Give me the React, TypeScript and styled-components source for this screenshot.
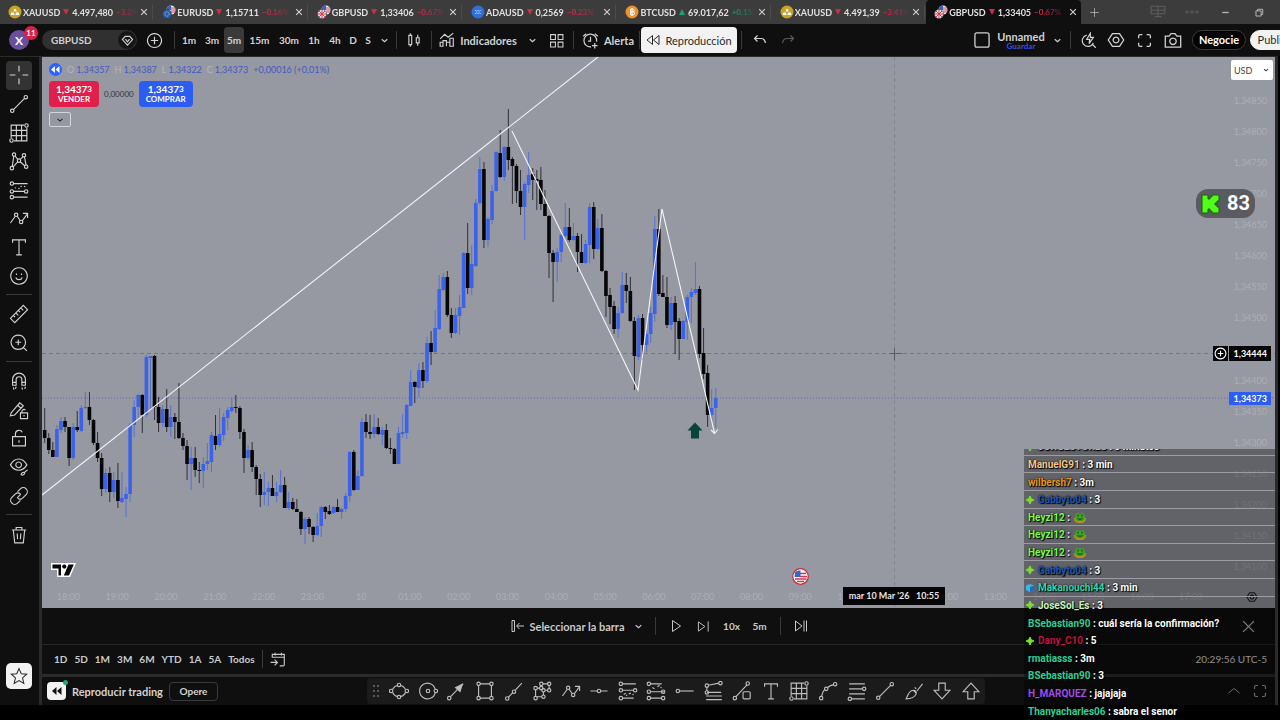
import React from "react";
import styled, { createGlobalStyle, css } from "styled-components";

const UI = `Lato, "Open Sans", sans-serif`;
const CHAT = `Roboto, "Liberation Sans", sans-serif`;
const INK = "#0f0f0f";
const EDGE = "#2b2b2c";
const PAPER = "#9698a2";
const TEXT = "#d2d2d2";

const Global = createGlobalStyle`
  * { box-sizing: border-box; }
  body { margin: 0; background: #000; font-family: ${UI}; font-size: 11px; color: ${TEXT}; }
  button, select { font: inherit; color: inherit; background: none; border: 0; padding: 0; margin: 0; }
  ol, ul { list-style: none; margin: 0; padding: 0; }
  svg { display: block; flex: none; }
`;

/* ---------- icons, all on a 28 unit grid ---------- */

type Node = [number, number];
type Glyph = { d: string; n?: Node[]; fill?: string; dots?: Node[] };

const glyphs: Record<string, Glyph> = {
  cross: { d: "M14 1v8M14 19v8M1 14h8M19 14h8" },
  trend: { d: "M6.5 21.5L21.5 6.5", n: [[4.5, 23.5], [23.5, 4.5]] },
  grid: { d: "M3 21V3H21M25 7V25H7M10.3 3V25M17.6 3V25M3 10.3H25M3 17.6H25", n: [[24.5, 3.5], [3.5, 24.5]] },
  pattern: { d: "M4.5 22L6.7 7M8.5 7L12.5 12M15.5 12L20 7.5M21.5 8L24 20M12.5 15L5.5 22.5M15.5 15L22.5 21", n: [[7, 5], [14, 13.5], [21, 6], [4, 24], [24, 22]] },
  forecast: { d: "M6 5H26M6 16H22M6 24H26", n: [[4, 5], [4, 16], [24, 16], [4, 24]], dots: [[9, 11], [14, 12], [17, 9], [22, 9]] },
  zigzag: { d: "M2 21L8.8 11.5M11.5 11.5L15.5 17.5M18.5 18L26 8M19.5 7.5h6.5v6.5", n: [[10, 9.5], [17, 19.5]] },
  text: { d: "M5 8V4H23V8M14 4V25M10 25H18" },
  smile: { d: "M14 2.5a11.5 11.5 0 1 0 .01 0M9.5 16a4.8 4.8 0 0 0 9 0M10.5 10.5v2M17.5 10.5v2" },
  ruler: { d: "M2 20L20 2l6 6L8 26zM6 16l2.5 2.5M9.5 12.5l3.5 3.5M13 9l2.5 2.5M16.5 5.5l3.5 3.5" },
  zoom: { d: "M13 3a10 10 0 1 0 .01 0M20 20l5 5M13 9v8M9 13h8" },
  magnet: { d: "M5 20V12a9 9 0 0 1 18 0v8h-5v-8a4 4 0 0 0-8 0v8zM5 16h5M18 16h5M6 23l1 3M10 22l-1 3M18 23l1 3M23 22l-1 3" },
  pencilLock: { d: "M3 18L15 4l5 4L8 21l-6 1zM12 7l5 5M16 18h10v8H16zM18 18v-2a3 3 0 0 1 5-2", dots: [[21, 22]] },
  lock: { d: "M5 12H23V25H5zM9 12V8a5 5 0 0 1 9.5-2M14 17v3.5" },
  eye: { d: "M2 11c6-11 17-11 23 0c-6 10-17 10-23 0zM13.5 7a4 4 0 1 0 .01 0M17 25c0-3 3-4 5-3c0 3-3 4-5 3zM22 21l4-3" },
  link: { d: "M12 8l4-4a5.5 5.5 0 0 1 8 8l-5 5a5.5 5.5 0 0 1-7 0M16 20l-4 4a5.5 5.5 0 0 1-8-8l5-5a5.5 5.5 0 0 1 7 0M11.5 16.5l5-5" },
  trash: { d: "M4 7H24M10 7V3.5h8V7M6 7l2 18H20L22 7M11.5 12l.5 8M16.5 12l-.5 8" },
  star: { d: "M14 2.5l3.5 8l8.5.7l-6.5 5.8l2 8.5l-7.5-4.5l-7.5 4.5l2-8.5L2 11.2l8.5-.7z" },
  ellipse: { d: "M5 12C7 8 10 6.5 12 6.3M16 6.3C19 6.7 21.5 8.5 23 12M5 16C7 20 10 21.5 12 21.7M16 21.7C19 21.3 21.5 19.5 23 16", n: [[14, 5.5], [14, 22.5], [3, 14], [25, 14]] },
  circle: { d: "M24 11.5A11 11 0 1 0 24 16.5", n: [[14, 14], [25, 14]] },
  arrow: { d: "M6.5 22L18 10M22 6l2-2", n: [[4.5, 24]], fill: "M24 3l-4 13l-8-7z" },
  rect: { d: "M7 4H21M7 24H21M5 6V22M23 6V22", n: [[5, 4], [23, 4], [5, 24], [23, 24]] },
  ray: { d: "M6 23L12 16.5M15.5 13L25 3", n: [[4.5, 24.5], [14, 15]] },
  poly: { d: "M5 22V12M7 10h4M12 8V6M15 4h8M24 6v5M22 13h-4M16 15v5M14 22H7", n: [[5, 24], [5, 10], [13, 10], [13, 4], [24, 4], [24, 13], [16, 13], [16, 22]] },
  hline: { d: "M2 14H11.5M16.5 14H26", n: [[14, 14]] },
  hray: { d: "M6 14H26", n: [[4, 14]] },
  longpos: { d: "M6 4H25M6 13H22M6 24H22M8 19l3-2M15 18l3-1", n: [[4, 4], [4, 13], [24, 13], [4, 24]], dots: [[21, 19], [12, 20]] },
  shortpos: { d: "M6 4H22M6 15H25M6 24H22M9 9l3 2M16 8l3-2", n: [[4, 4], [4, 15], [24, 15], [24, 24], [4, 24]], dots: [[21, 9]] },
  fibchannel: { d: "M4 14V8M6 6L21 3M4 16H24M3 21H25M3 26H25", n: [[4, 6.5], [23, 3], [4, 16]] },
  shape: { d: "M5.5 22L21 5.5M17 15h7a1.5 1.5 0 0 1 1.500 1.500v7a1.500 1.500 0 0 1-1.500 1.500h-7a1.500 1.500 0 0 1-1.500-1.500v-7a1.500 1.500 0 0 1 1.500-1.500z", n: [[4, 24], [22, 3.5]] },
  curve: { d: "M5 22C6 17 8 13 10 12M13 9.5C16 7 19 5.5 22 5", n: [[4.5, 24], [11.5, 11], [24, 4.5]] },
  fiblines: { d: "M3 4H25M3 11H22M3 18H25M6 25H25", n: [[24, 11], [4, 25]] },
  brush: { d: "M3 25C6 17 9 13 13 13c3 0 5 2 4 5c-2 5-7 7-14 7zM13 13L17 17M18 14L26 4M15 9l2 2" },
  down: { d: "M9.5 3h9v10H25L14 25L3 13h6.5z" },
  up: { d: "M9.5 25h9V15H25L14 3L3 15h6.5z" },
  candles: { d: "M5 6h5v16H5zM7.5 2v4M7.5 22v4M18 10h5v9h-5zM20.5 5v5M20.5 19v5" },
  indicators: { d: "M2 25V18h5v7zM7 25V15h6v10M13 25V18h6v7M19 25V11h6v14zM2 12l8-8l6 5l9-7" },
  tiles: { d: "M3 3h9v9H3zM17 3h9v9h-9zM3 17h9v9H3zM17 17h9v9h-9z" },
  alarm: { d: "M24 16A10.5 10.5 0 1 0 15 24.5M14 8v7h-4M2 7l5-4M21 3l5 4M21 18v9M16.5 22.5h9" },
  rewind: { d: "M13 5v18L2 14zM26 5v18L15 14z" },
  undo: { d: "M9 5L3 11l6 6M3 11h13c5 0 8 3 9 9" },
  redo: { d: "M19 5l6 6l-6 6M25 11H12c-5 0-8 3-9 9" },
  square: { d: "M6 3H22a3 3 0 0 1 3 3V22a3 3 0 0 1-3 3H6a3 3 0 0 1-3-3V6a3 3 0 0 1 3-3z" },
  quick: { d: "M11 5a9.5 9.5 0 1 0 11 13M20 20l6 6M17 2l-6 10h5l-1 7l7-10h-5z" },
  hexagon: { d: "M8.5 4H19.5L26 14L19.5 24H8.5L2 14zM14 9.5a4.5 4.5 0 1 0 .01 0" },
  expand: { d: "M3 10V6a3 3 0 0 1 3-3h4M18 3h4a3 3 0 0 1 3 3v4M25 18v4a3 3 0 0 1-3 3h-4M10 25H6a3 3 0 0 1-3-3v-4" },
  camera: { d: "M2 8h6l3-4h6l3 4h6v17H2zM14 11a5 5 0 1 0 .01 0" },
  plusCircle: { d: "M14 2.5a11.5 11.5 0 1 0 .01 0M14 8v12M8 14h12" },
  gem: { d: "M9 5H19L25 12L14 24L3 12zM9.5 11L14 17L18.5 11" },
  chevron: { d: "M7 11l7 6l7-6" },
  chevronUp: { d: "M3 18L14 9l11 9" },
  close: { d: "M4 4L24 24M24 4L4 24" },
  plus: { d: "M14 3V25M3 14H25" },
  desk: { d: "M2 4H26V17H2zM2 11H26M14 4V22M8 22H20" },
  dots: { d: "", n: [[4, 14], [14, 14], [24, 14]] },
  minus: { d: "M4 14H24" },
  windows: { d: "M3 9H19V25H3zM8 9V4H24V20H19" },
  pickBar: { d: "M2 3h5v22H2zM12 14H26M17 8l-6 6l6 6" },
  play: { d: "M7 3L23 14L7 25z" },
  step: { d: "M3 4L17 14L3 24zM24 3V25" },
  toEnd: { d: "M3 4L16 14L3 24zM20 3V25M25 3V25" },
  calendar: { d: "M4 12V6H25V24a2 2 0 0 1-2 2H17M4 11H25M9 3V8M20 3V8M1 20h11M8 15l5 5l-5 5" },
};

const Icon = ({ name, size = 20, w = 2 }: { name: string; size?: number; w?: number }) => {
  const g = glyphs[name];
  return (
    <svg width={size} height={size} viewBox="0 0 28 28" fill="none" stroke="currentColor" strokeWidth={w} aria-hidden="true">
      <path d={g.d} />
      {g.fill && <path d={g.fill} fill="currentColor" stroke="none" />}
      {g.n?.map(([x, y]) => <circle key={`${x}-${y}`} cx={x} cy={y} r={2.4} />)}
      {g.dots?.map(([x, y]) => <circle key={`${x}-${y}`} cx={x} cy={y} r={1} fill="currentColor" stroke="none" />)}
    </svg>
  );
};

const CoinIcon = ({ kind }: { kind: string }) => (
  <svg width="14" height="14" viewBox="0 0 14 14" aria-hidden="true">
    {kind === "gold" && (
      <>
        <circle cx="7" cy="7" r="6.5" fill="#c9a227" />
        <path d="M5.5 6.5l.7-2.5h1.800l.7 2.5zM2.5 10l.8-2.600h2.600L6.600 10zM7.400 10l.7-2.600h2.600l.8 2.600z" fill="#fff" />
      </>
    )}
    {kind === "ada" && (
      <>
        <circle cx="7" cy="7" r="6.5" fill="#2f6fdc" />
        <path d="M4 5.5h6M4 8.5h6M5 7h4" stroke="#a9c8ff" strokeDasharray="1 .6" />
      </>
    )}
    {kind === "btc" && (
      <>
        <circle cx="7" cy="7" r="6.5" fill="#f0922b" />
        <path d="M5.5 4h2.200a1.400 1.400 0 0 1 0 2.800H5.5h2.600a1.500 1.500 0 0 1 0 3H5.5zM7 3v8" fill="none" stroke="#fff" />
      </>
    )}
    {(kind === "eur" || kind === "gbp") && (
      <>
        <circle cx="9" cy="5" r="4.5" fill="#e9e9f2" />
        <path d="M9 .5a4.5 4.5 0 0 0-4.5 4.5H9z" fill="#3a5fb8" />
        <path d="M9 3h4M9 5h4.5M5 7h8" stroke="#d4475c" />
        <circle cx="5" cy="9" r="4.5" fill={kind === "eur" ? "#1f5fc4" : "#eceaf2"} stroke="#3c3c3c" strokeWidth=".6" />
        {kind === "eur" ? (
          <circle cx="5" cy="9" r="2.2" fill="none" stroke="#e9c93d" strokeDasharray="1 1" />
        ) : (
          <path d="M5 4.8v8.400M.8 9h8.400M2 6l6 6M8 6l-6 6" stroke="#d4364d" />
        )}
      </>
    )}
  </svg>
);

/* ---------- page frame ---------- */

const Page = styled.div`
  position: relative;
  display: flex;
  flex-direction: column;
  min-height: 100vh;
  padding-bottom: 15px;
  overflow: hidden;
`;

const Workspace = styled.div`
  flex: 1;
  display: flex;
  gap: 3px;
  padding-top: 1px;
  background: ${EDGE};
  border-right: 2px solid #000;
`;

const Column = styled.main`
  flex: 1;
  min-width: 0;
  display: flex;
  flex-direction: column;
  padding-right: 3px;
`;

/* ---------- browser style tabs ---------- */

const TabStrip = styled.nav`
  display: flex;
  height: 24px;
  background: #3c3c3d;
`;

const Tab = styled.div<{ $active?: boolean }>`
  flex: 108 1 0;
  min-width: 0;
  display: flex;
  align-items: center;
  gap: 1px;
  padding: 0 1px 0 8px;
  background: ${(p) => (p.$active ? INK : "transparent")};
  border-radius: 4px 4px 0 0;
`;

const TabLink = styled.a`
  flex: 1;
  min-width: 0;
  display: flex;
  align-items: center;
  gap: 3px;
  overflow: hidden;
  white-space: nowrap;
  color: #e0e0e0;
  font-size: 9px;
  font-weight: 700;
  text-decoration: none;
  mask-image: linear-gradient(90deg, #000 80%, rgba(0, 0, 0, 0.2) 100%);
`;

const Delta = styled.span<{ $up?: boolean }>`
  font-size: 8px;
  color: ${(p) => (p.$up ? "#1f9d78" : "#d02a4c")};
`;

const Mark = styled.svg<{ $up?: boolean }>`
  fill: ${(p) => (p.$up ? "#1f9d78" : "#d02a4c")};
  transform: ${(p) => (p.$up ? "none" : "rotate(180deg)")};
`;

const TabClose = styled.button`
  width: 14px;
  display: grid;
  place-items: center;
  color: #cfcfcf;
`;

const TabRule = styled.i`
  width: 1px;
  height: 14px;
  background: #4c4c4d;
`;

const WindowTools = styled.div`
  flex: 140 1 0;
  display: flex;
  align-items: center;
  padding: 0 3px 0 8px;
  color: #b8b8b8;
`;

const tabs = [
  { coin: "gold", name: "XAUUSD", price: "4.497,480", pct: "−3.29%" },
  { coin: "eur", name: "EURUSD", price: "1,15711", pct: "−0.16%" },
  { coin: "gbp", name: "GBPUSD", price: "1,33406", pct: "−0.67%" },
  { coin: "ada", name: "ADAUSD", price: "0,2569", pct: "−0.23%" },
  { coin: "btc", name: "BTCUSD", price: "69.017,62", pct: "+0.15%", up: true },
  { coin: "gold", name: "XAUUSD", price: "4.491,39", pct: "−3.41%" },
  { coin: "gbp", name: "GBPUSD", price: "1,33405", pct: "−0.67%", active: true },
];

/* ---------- top toolbar ---------- */

const TopBar = styled.header`
  display: flex;
  align-items: center;
  height: 32px;
  background: ${INK};
  overflow: hidden;
  white-space: nowrap;
`;

const Avatar = styled.button`
  position: relative;
  width: 20px;
  height: 20px;
  margin: 0 13px 0 9px;
  flex: none;
  border-radius: 50%;
  background: #6a4f9c;
  color: #fff;
  font-size: 12px;
  font-weight: 700;
`;

const Badge = styled.span`
  position: absolute;
  left: 15px;
  top: -4px;
  width: 14px;
  height: 14px;
  border-radius: 50%;
  background: #dc1f45;
  font-size: 8px;
  line-height: 14px;
  text-align: center;
`;

const SymbolPill = styled.button`
  display: flex;
  align-items: center;
  justify-content: space-between;
  flex: none;
  width: 95px;
  height: 20px;
  padding: 0 1px 0 9px;
  border-radius: 10px;
  background: #303031;
  font-size: 10px;
  font-weight: 700;
`;

const GemRing = styled.span`
  display: grid;
  place-items: center;
  width: 18px;
  height: 18px;
  border-radius: 50%;
  background: #161616;
`;

const Cell = styled.button<{ $w: number; $on?: boolean; $dim?: boolean }>`
  display: flex;
  align-items: center;
  justify-content: center;
  gap: 5px;
  flex: none;
  width: ${(p) => p.$w}px;
  height: 26px;
  font-weight: 700;
  font-size: 10px;
  border-radius: 4px;
  ${(p) => p.$on && css`background: #3a3a3b;`}
  ${(p) => p.$dim && css`color: #5c5c5c;`}
`;

const Wide = styled(Cell)`
  font-size: 11px;
`;

const Rule = styled.i<{ $m?: number }>`
  flex: none;
  width: 1px;
  height: 18px;
  margin: 0 ${(p) => p.$m ?? 3}px;
  background: #3a3a3b;
`;

const ReplayButton = styled.button`
  display: flex;
  align-items: center;
  justify-content: center;
  gap: 5px;
  flex: none;
  width: 96px;
  height: 26px;
  border-radius: 4px;
  background: #f2f2f3;
  color: #2a2a2e;
`;

const Spacer = styled.div`
  flex: 1;
`;

const LayoutName = styled.button`
  flex: none;
  width: 52px;
  font-size: 11px;
  font-weight: 700;
  line-height: 11px;
`;

const Save = styled.span`
  display: block;
  font-size: 8px;
  line-height: 8px;
  color: #3350e0;
`;

const Pill = styled.button<{ $light?: boolean }>`
  flex: none;
  width: 54px;
  height: 20px;
  margin-left: 4px;
  border-radius: 10px;
  border: 1px solid ${(p) => (p.$light ? "#f2f2f2" : "#3a3a3b")};
  background: ${(p) => (p.$light ? "#f2f2f2" : "#000")};
  color: ${(p) => (p.$light ? "#2a2a2e" : "#fff")};
  font-weight: ${(p) => (p.$light ? 400 : 700)};
  line-height: 18px;
`;

const PublishSlot = styled.div`
  flex: none;
  width: 34px;
  overflow: hidden;
`;

/* ---------- left toolbar ---------- */

const Side = styled.aside`
  display: flex;
  flex-direction: column;
  align-items: center;
  width: 39px;
  padding: 4px 1px 16px 0;
  background: ${INK};
`;

const ToolGroup = styled.div<{ $h: number }>`
  display: flex;
  flex-direction: column;
  height: ${(p) => p.$h}px;
`;

const Tool = styled.button<{ $on?: boolean }>`
  flex: 1;
  width: 26px;
  display: grid;
  place-items: center;
  border-radius: 4px;
  background: ${(p) => (p.$on ? "#333334" : "none")};
`;

const ToolRule = styled.i`
  width: 26px;
  height: 1px;
  margin: 4px 0 5px;
  background: #3a3a3b;
`;

const StarTool = styled.button`
  display: grid;
  place-items: center;
  width: 26px;
  height: 26px;
  margin-top: auto;
  border-radius: 5px;
  background: #f2f2f3;
  color: #2a2a2e;
`;

/* ---------- chart ---------- */

const Chart = styled.section`
  position: relative;
  flex: 1;
  min-height: 551px;
  display: flex;
  flex-direction: column;
  background: ${PAPER};
  overflow: hidden;
`;

const Canvas = styled.svg`
  position: absolute;
  inset: 0;
  width: 100%;
  height: 100%;
`;

const ChartBody = styled.div`
  position: relative;
  flex: 1;
  display: flex;
  justify-content: space-between;
`;

const Legend = styled.div`
  display: flex;
  flex-direction: column;
  align-items: flex-start;
  gap: 5px;
  padding: 5px 7px;
`;

const Ohlc = styled.div`
  display: flex;
  align-items: center;
  gap: 5px;
  height: 14px;
  font-size: 9px;
  color: #4359c8;
`;

const Letter = styled.span`
  margin-right: 2px;
  color: #b4b6be;
`;

const RewindDot = styled.span`
  display: grid;
  place-items: center;
  width: 13px;
  height: 13px;
  border-radius: 50%;
  background: #2962ff;
  color: #fff;
`;

const Trade = styled.div`
  display: flex;
  align-items: center;
  gap: 5px;
  font-size: 8px;
  color: #33343a;
`;

const TradeButton = styled.button<{ $buy?: boolean }>`
  width: ${(p) => (p.$buy ? 54 : 50)}px;
  height: 26px;
  border-radius: 4px;
  background: ${(p) => (p.$buy ? "#2c5cf2" : "#e0204b")};
  color: #fff;
  font-size: 8px;
  line-height: 10px;
  font-weight: 700;
`;

const Quote = styled.span`
  display: block;
  font-size: 10px;
`;

const Pip = styled.span`
  font-size: 8px;
  vertical-align: 1px;
`;

const Fold = styled.button`
  display: grid;
  place-items: center;
  width: 22px;
  height: 15px;
  border: 1px solid #d5d6da;
  border-radius: 2px;
  color: #222;
`;

const PriceAxis = styled.div`
  display: flex;
  flex-direction: column;
  align-items: flex-end;
  padding: 3px 2px 13px 0;
`;

const UnitBox = styled.label`
  display: flex;
  align-items: center;
  width: 42px;
  height: 20px;
  padding-right: 3px;
  border-radius: 2px;
  background: #fff;
  color: #444;
  font-size: 9px;
`;

const Unit = styled.select`
  flex: 1;
  min-width: 0;
  appearance: none;
  padding-left: 3px;
  outline: none;
`;

const Prices = styled.ol`
  flex: 1;
  display: flex;
  flex-direction: column;
  justify-content: space-between;
  margin-top: 15px;
  padding-right: 6px;
  color: #adafb8;
  font-size: 9px;
  line-height: 12px;
  text-align: right;
`;

const PriceItem = styled.li`
  height: 12px;
`;

const Hours = styled.ol`
  position: relative;
  display: grid;
  grid-template-columns: repeat(24, 1fr);
  height: 22px;
  padding: 0 60px 0 2px;
  line-height: 22px;
  text-align: center;
  color: #adafb8;
  font-size: 9px;
`;

const CursorPrice = styled.div`
  position: absolute;
  top: 289px;
  right: 4px;
  display: flex;
  gap: 1px;
  color: #fff;
`;

const PriceTag = styled.span<{ $live?: boolean }>`
  padding: 0 4px 0 5px;
  background: ${(p) => (p.$live ? "#2c5cf2" : "#060606")};
  color: #fff;
  font-size: 9px;
  font-weight: 700;
  line-height: ${(p) => (p.$live ? 13 : 15)}px;
`;

const AddAlert = styled.button`
  display: grid;
  place-items: center;
  width: 15px;
  height: 15px;
  background: #060606;
`;

const LivePrice = styled.div`
  position: absolute;
  top: 335px;
  right: 4px;
  display: flex;
`;

const CursorTime = styled.div`
  position: absolute;
  left: 801px;
  bottom: 3px;
  width: 102px;
  background: #060606;
  color: #e4e4e4;
  font-size: 9px;
  font-weight: 700;
  line-height: 18px;
  text-align: center;
  white-space: pre;
`;

const Flag = styled.div`
  position: absolute;
  left: 750px;
  bottom: 23px;
`;

const AxisSettings = styled.button`
  position: absolute;
  right: 17px;
  bottom: 5px;
  color: #1c1c1e;
`;

const Logo = styled.div`
  position: absolute;
  left: 8px;
  bottom: 30px;
`;

const Viewers = styled.div`
  position: absolute;
  top: 132px;
  right: 20px;
  display: flex;
  align-items: center;
  gap: 7px;
  width: 59px;
  height: 29px;
  padding-left: 5px;
  border-radius: 12px;
  background: rgba(82, 82, 87, 0.88);
  color: #fff;
  font: 700 20px/29px ${CHAT};
`;

/* high, body top, body bottom, low of every bar in plot pixels; the last field tells rising from falling */
const bars = `408,430,438,443,d 433,438,450,454,d 442,450,457,457,d 425,429,457,457,u 417,421,430,433,u 417,421,427,432,d
427,427,458,466,d 423,427,458,460,u 411,427,430,432,d 405,408,431,432,u 392,407,408,409,u 392,407,420,425,d 419,420,443,445,d
432,443,458,462,d 453,458,489,496,d 468,473,489,493,u 467,473,492,502,d 472,480,492,498,u 463,480,501,508,d 472,498,502,503,u
487,494,499,517,u 423,425,494,502,u 400,407,425,437,u 394,395,407,420,u 394,395,415,433,d 355,357,415,417,u 356,356,358,410,u
355,356,407,420,d 397,407,423,432,d 405,409,423,427,u 389,409,427,432,d 405,417,427,437,u 413,417,422,439,d 383,422,438,439,d
433,438,446,450,d 440,446,464,480,d 447,458,464,490,u 447,458,470,477,d 462,470,471,483,d 457,464,471,488,u 443,461,464,470,u
432,435,462,472,u 415,436,445,450,d 408,434,445,447,u 413,417,435,441,u 407,410,418,430,u 398,407,411,413,u 395,407,408,413,d
406,408,432,439,d 429,432,458,473,d 445,450,458,460,u 442,450,467,472,d 465,467,479,495,d 474,479,495,507,d 472,492,495,505,u
482,488,492,506,u 475,488,496,496,d 482,492,496,502,u 470,485,492,493,u 477,485,508,508,d 492,502,508,510,u 498,502,509,510,d
499,509,512,512,d 511,512,529,535,d 517,519,529,544,u 517,519,527,534,d 526,527,535,542,d 513,526,535,536,u 506,507,526,537,u
506,507,512,519,d 505,511,514,515,d 506,507,513,514,u 499,507,512,512,d 508,509,512,519,u 493,496,509,512,u 451,452,496,502,u
450,452,490,491,d 470,476,490,490,u 418,422,476,477,u 414,422,432,438,d 415,432,434,439,d 414,427,434,438,u 418,427,434,435,d
427,430,435,445,u 424,430,448,449,d 438,448,449,454,d 448,449,464,464,d 427,433,464,464,u 414,432,434,438,u 404,405,433,439,u
370,382,406,406,u 381,382,387,403,d 363,370,388,397,u 362,370,381,388,d 337,343,381,383,u 331,343,352,365,d 310,328,352,353,u
275,289,329,330,u 273,277,290,291,u 271,277,315,317,d 308,315,333,338,d 308,315,333,334,u 295,307,316,335,u 252,253,308,308,u
223,253,288,294,d 245,264,288,295,u 199,203,266,267,u 157,169,203,205,u 162,169,240,248,d 217,219,240,247,u 185,191,220,224,u
151,152,191,192,u 130,153,177,178,d 146,147,177,181,u 109,147,160,170,d 157,159,166,204,d 164,166,191,203,d 170,191,207,215,d
182,184,207,240,u 152,175,185,193,u 168,174,180,200,d 170,179,181,210,d 167,180,204,210,d 190,204,216,216,d 215,216,253,278,d
250,253,262,302,d 248,252,262,282,u 234,235,252,262,u 203,227,236,238,u 208,227,240,242,d 223,236,240,241,u 233,236,252,272,d
234,252,263,263,d 240,244,263,264,u 203,207,245,263,u 202,207,249,259,d 219,228,249,250,u 214,228,271,272,d 270,271,296,317,d
288,295,307,324,d 301,306,329,334,d 307,313,329,338,u 272,285,313,314,u 273,285,291,303,d 277,291,321,322,d 317,321,356,390,d
315,318,357,360,u 314,318,345,360,d 330,334,345,352,u 307,313,334,343,u 216,229,314,322,u 209,229,294,296,d 275,293,297,297,d
277,297,325,328,d 297,303,325,330,u 296,303,322,354,d 318,321,339,360,d 320,321,339,339,u 295,297,322,340,u 288,292,297,323,u
262,289,293,295,u 286,289,354,358,d 328,353,374,379,d 365,373,415,427,d 389,408,415,423,u 388,398,408,428,u`
  .split(/\s+/)
  .map((row) => row.split(","))
  .map(([hi, top, bottom, lo, dir]) => ({ hi: +hi, top: +top, bottom: +bottom, lo: +lo, up: dir === "u" }));

const FIRST_BAR = 44.7;
const BAR_STEP = 4.067;

const Plot = () => (
  <Canvas role="img" aria-label="GBPUSD 5m">
    <line x1="0" x2="100%" y1="296.5" y2="296.5" stroke="#74757d" strokeDasharray="4 3" />
    <line x1="852.5" x2="852.5" y1="0" y2="100%" stroke="#83858d" strokeDasharray="4 3" />
    <line x1="0" x2="100%" y1="341" y2="341" stroke="#5a68c4" strokeDasharray="1 2" />
    <g transform="translate(-42 -57)">
      {bars.map((b, i) => {
        const x = FIRST_BAR + i * BAR_STEP;
        return (
          <g key={i} fill={b.up ? "#3b62ea" : "#060608"}>
            <rect x={x - 0.5} y={b.hi} width="1" height={b.lo - b.hi} opacity=".7" />
            <rect x={x - 1.8} y={b.top} width="3.6" height={Math.max(1, b.bottom - b.top)} />
          </g>
        );
      })}
      <g fill="none" stroke="#f4f4f6" strokeWidth="1.1">
        <path d="M42 495L598 57" />
        <path d="M512 131L638 390L662 209L714.5 433M711 430l3.5 3.5l3.5-4" />
      </g>
      <path d="M695 422.5l7.5 8h-3.5v8h-8v-8h-3.5z" fill="#07453b" />
      <path d="M890 353.500h12M894.500 348v12" stroke="#5b5c64" />
    </g>
  </Canvas>
);

const prices = ["1,34850", "1,34800", "1,34750", "1,34700", "1,34650", "1,34600", "1,34550", "1,34500", "", "1,34400", "1,34350", "1,34300", "1,34250", "1,34200", "1,34150", "1,34100"];

const hours = ["18:00", "19:00", "20:00", "21:00", "22:00", "23:00", "10", "01:00", "02:00", "03:00", "04:00", "05:00", "06:00", "07:00", "08:00", "09:00", "10:00", "11:00", "12:00", "13:00", "14:00", "15:00", "16:00", "17:00"];

/* ---------- bars under the chart ---------- */

const ReplayBar = styled.div`
  display: grid;
  grid-template-columns: 1fr auto 1fr;
  align-items: center;
  height: 37px;
  background: ${INK};
  border-bottom: 1px solid #262627;
  color: #c9c9c9;
`;

const ReplayTools = styled.div`
  grid-column: 2;
  display: flex;
  align-items: center;
  padding-left: 4px;
`;

const CloseReplay = styled.button`
  justify-self: end;
  margin-right: 19px;
  color: #c0c0c0;
`;

const RangeBar = styled.div`
  display: flex;
  align-items: center;
  gap: 7px;
  height: 29px;
  padding: 0 8px 1px 12px;
  background: ${INK};
  margin-bottom: 3px;
`;

const Range = styled.button`
  font-size: 10px;
  font-weight: 700;
  color: #c9c9c9;
`;

const Clock = styled.span`
  margin-left: auto;
  font-size: 10px;
  color: #dcdcdc;
`;

const Footer = styled.footer`
  display: flex;
  align-items: center;
  height: 28px;
  background: ${INK};
`;

const Broker = styled.div`
  display: flex;
  align-items: center;
  flex: 0 0 325px;
  gap: 6px;
  padding-left: 5px;
  font-weight: 700;
  font-size: 11px;
`;

const BrokerIcon = styled.span`
  position: relative;
  display: grid;
  place-items: center;
  width: 19px;
  height: 18px;
  border-radius: 4px;
  background: #f2f2f3;
  color: #111;
`;

const Online = styled.i`
  position: absolute;
  right: -2px;
  top: -2px;
  width: 5px;
  height: 5px;
  border-radius: 50%;
  background: #1fa67a;
`;

const Operate = styled.button`
  width: 49px;
  height: 19px;
  border: 1px solid #3a3a3b;
  border-radius: 4px;
  font-size: 10px;
`;

const Dock = styled.div`
  display: flex;
  align-items: center;
  flex: 0 0 618px;
  height: 26px;
  border-radius: 4px;
  background: #1b1b1c;
  color: #bdbdbd;
`;

const DockTool = styled.button`
  flex: 1;
  display: grid;
  place-items: center;
`;

const PanelTools = styled.div`
  display: flex;
  gap: 12px;
  margin-left: auto;
  padding-right: 8px;
  color: #a0a0a0;
`;

const dock = ["ellipse", "circle", "arrow", "rect", "ray", "poly", "zigzag", "hline", "longpos", "shortpos", "hray", "fibchannel", "shape", "text", "grid", "curve", "fiblines", "trend", "brush", "down", "up"];

/* ---------- stream chat ---------- */

const Chat = styled.div`
  position: absolute;
  right: 5px;
  bottom: 0;
  display: flex;
  flex-direction: column;
  justify-content: flex-end;
  width: 251px;
  height: 271px;
  overflow: hidden;
  background: rgba(0, 0, 0, 0.35);
  pointer-events: none;
`;

const Messages = styled.ul`
  flex: none;
  display: grid;
  grid-auto-rows: 1fr;
  height: 282px;
  font-family: ${CHAT};
  font-size: 10px;
  font-weight: 700;
  color: #fff;
`;

const Message = styled.li<{ $line: boolean; $badged: boolean }>`
  display: flex;
  align-items: center;
  gap: 4px;
  padding: 1px 0 0 ${(p) => (p.$badged ? 2 : 4)}px;
  border-bottom: 1px solid ${(p) => (p.$line ? "#9c9da4" : "transparent")};
  text-shadow: 0 0 2px #000, 1px 1px 1px #000;
  white-space: nowrap;
`;

const Who = styled.span<{ $c: string }>`
  color: ${(p) => p.$c};
`;

const chat: { who: string; c: string; text: string; badge?: "clover" | "cube"; frog?: boolean }[] = [
  { who: "JORGESTORES", c: "#7fd858", text: "3 minutos", badge: "clover" },
  { who: "ManuelG91", c: "#f2c98a", text: "3 min" },
  { who: "wilbersh7", c: "#e8951c", text: "3m" },
  { who: "Gabbyto04", c: "#1c55b0", text: "3", badge: "clover" },
  { who: "Heyzi12", c: "#75fd46", text: "", frog: true },
  { who: "Heyzi12", c: "#75fd46", text: "", frog: true },
  { who: "Heyzi12", c: "#75fd46", text: "", frog: true },
  { who: "Gabbyto04", c: "#1c55b0", text: "3", badge: "clover" },
  { who: "Makanouchi44", c: "#31d6b0", text: "3 min", badge: "cube" },
  { who: "JoseSol_Es", c: "#c8f5b4", text: "3", badge: "clover" },
  { who: "BSebastian90", c: "#2fcf96", text: "cuál sería la confirmación?" },
  { who: "Dany_C10", c: "#c4123f", text: "5", badge: "clover" },
  { who: "rmatiasss", c: "#2fcf96", text: "3m" },
  { who: "BSebastian90", c: "#2fcf96", text: "3" },
  { who: "H_MARQUEZ", c: "#a04ee8", text: "jajajaja" },
  { who: "Thanyacharles06", c: "#2fcf96", text: "sabra el senor" },
];

const ChatBadge = ({ kind }: { kind: "clover" | "cube" }) => (
  <svg width="8" height="8" viewBox="0 0 8 8" aria-hidden="true">
    {kind === "clover" ? (
      <path d="M4 0l1.3 2.7L8 4L5.3 5.3L4 8L2.7 5.3L0 4l2.7-1.3z" fill="#7be02a" stroke="#7be02a" />
    ) : (
      <>
        <path d="M0 1.5L4 0l4 1.5V6L4 8L0 6z" fill="#39b6f2" />
        <path d="M4 3l4-1.5V6L4 8z" fill="#1271c4" />
      </>
    )}
  </svg>
);

const Frog = () => (
  <svg width="12" height="11" viewBox="0 0 12 11" aria-hidden="true">
    <path d="M0 6c0 4 3 5 6 5s6-1 6-5z" fill="#c98f22" />
    <path d="M1 6C1 3 2 1 3.5 1C5 1 5 2 6 2s1-1 2.5-1S11 3 11 6c0 2-2 3.5-5 3.5S1 8 1 6z" fill="#3fa424" />
    <path d="M4 2.5v2M8 2.5v2M3.5 6.5c1.5 1 3.5 1 5 0" stroke="#0c3a0a" fill="none" />
  </svg>
);

const intervals: [string, number][] = [["1m", 22], ["3m", 24], ["5m", 20], ["15m", 31], ["30m", 28], ["1h", 22], ["4h", 20], ["D", 16], ["S", 14]];

const SideGroup = ({ names, h, active }: { names: string[]; h: number; active?: string }) => (
  <ToolGroup $h={h}>
    {names.map((n) => (
      <Tool key={n} $on={n === active} aria-label={n}>
        <Icon name={n} w={1.6} />
      </Tool>
    ))}
  </ToolGroup>
);

export default function App() {
  return (
    <Page>
      <Global />
      <TabStrip>
        {tabs.map((t, i) => (
          <Tab key={i} $active={t.active}>
            <CoinIcon kind={t.coin} />
            <TabLink href="#">
              <span>{t.name}</span>
              <Mark $up={t.up} width="6" height="6" viewBox="0 0 6 6"><path d="M3 0L6 6H0z" /></Mark>
              <span>{t.price}</span>
              <Delta $up={t.up}>{t.pct}</Delta>
            </TabLink>
            <TabClose aria-label="close"><Icon name="close" size={8} w={4} /></TabClose>
            {!t.active && <TabRule />}
          </Tab>
        ))}
        <WindowTools>
          <Icon name="plus" size={11} w={2} />
          <Spacer />
          <Cell $w={34} $dim aria-label="desk"><Icon name="desk" size={16} /></Cell>
          <Cell $w={34} $dim aria-label="more"><Icon name="dots" size={14} w={2} /></Cell>
          <Cell $w={34} aria-label="minimize"><Icon name="minus" size={9} w={4} /></Cell>
          <Cell $w={34} aria-label="restore"><Icon name="windows" size={9} w={3} /></Cell>
        </WindowTools>
      </TabStrip>

      <TopBar>
        <Avatar aria-label="account">X<Badge>11</Badge></Avatar>
        <SymbolPill>GBPUSD<GemRing><Icon name="gem" size={13} w={2.4} /></GemRing></SymbolPill>
        <Cell $w={34} aria-label="add"><Icon name="plusCircle" size={17} /></Cell>
        <Rule />
        {intervals.map(([label, w]) => (
          <Cell key={label} $w={w} $on={label === "5m"}>{label}</Cell>
        ))}
        <Cell $w={18} aria-label="intervals"><Icon name="chevron" size={11} w={3} /></Cell>
        <Rule />
        <Cell $w={28} aria-label="bar style"><Icon name="candles" size={16} /></Cell>
        <Rule />
        <Wide $w={86}><Icon name="indicators" size={16} />Indicadores</Wide>
        <Cell $w={22} aria-label="favorites"><Icon name="chevron" size={11} w={3} /></Cell>
        <Cell $w={26} aria-label="templates"><Icon name="tiles" size={15} /></Cell>
        <Rule $m={4} />
        <Wide $w={60}><Icon name="alarm" size={17} />Alerta</Wide>
        <Rule $m={1} />
        <ReplayButton><Icon name="rewind" size={14} />Reproducción</ReplayButton>
        <Rule $m={4} />
        <Cell $w={28} aria-label="undo"><Icon name="undo" size={14} w={2.4} /></Cell>
        <Cell $w={28} $dim aria-label="redo"><Icon name="redo" size={14} w={2.4} /></Cell>
        <Spacer />
        <Cell $w={26} aria-label="layout"><Icon name="square" size={18} /></Cell>
        <LayoutName>Unnamed<Save>Guardar</Save></LayoutName>
        <Cell $w={20} aria-label="layouts"><Icon name="chevron" size={11} w={3} /></Cell>
        <Rule />
        <Cell $w={28} aria-label="search"><Icon name="quick" size={17} /></Cell>
        <Cell $w={28} aria-label="settings"><Icon name="hexagon" size={18} /></Cell>
        <Cell $w={28} aria-label="fullscreen"><Icon name="expand" size={15} w={2.4} /></Cell>
        <Cell $w={30} aria-label="snapshot"><Icon name="camera" size={18} /></Cell>
        <Pill>Negocie</Pill>
        <PublishSlot><Pill $light>Publicar</Pill></PublishSlot>
      </TopBar>

      <Workspace>
        <Side>
          <SideGroup h={229} active="cross" names={["cross", "trend", "grid", "pattern", "forecast", "zigzag", "text", "smile"]} />
          <ToolRule />
          <SideGroup h={57} names={["ruler", "zoom"]} />
          <ToolRule />
          <SideGroup h={143} names={["magnet", "pencilLock", "lock", "eye", "link"]} />
          <ToolRule />
          <SideGroup h={29} names={["trash"]} />
          <StarTool aria-label="favorites"><Icon name="star" size={18} w={1.6} /></StarTool>
        </Side>

        <Column>
          <Chart>
            <Plot />
            <ChartBody>
              <Legend>
                <Ohlc>
                  <RewindDot>
                    <svg width="9" height="7" viewBox="0 0 9 7" fill="currentColor"><path d="M4 0v7L0 3.5zM8.5 0v7l-4-3.5z" /></svg>
                  </RewindDot>
                  <span><Letter>O</Letter>1,34357</span>
                  <span><Letter>H</Letter>1,34387</span>
                  <span><Letter>L</Letter>1,34322</span>
                  <span><Letter>C</Letter>1,34373</span>
                  <span>+0,00016 (+0,01%)</span>
                </Ohlc>
                <Trade>
                  <TradeButton><Quote>1,3437<Pip>3</Pip></Quote>VENDER</TradeButton>
                  <span>0,00000</span>
                  <TradeButton $buy><Quote>1,3437<Pip>3</Pip></Quote>COMPRAR</TradeButton>
                </Trade>
                <Fold aria-label="fold"><Icon name="chevron" size={10} w={3} /></Fold>
              </Legend>
              <PriceAxis>
                <UnitBox>
                  <Unit aria-label="currency" defaultValue="USD"><option>USD</option></Unit>
                  <Icon name="chevron" size={8} w={4} />
                </UnitBox>
                <Prices>{prices.map((p, i) => <PriceItem key={i}>{p}</PriceItem>)}</Prices>
              </PriceAxis>
            </ChartBody>
            <Hours>{hours.map((h, i) => <li key={i}>{h}</li>)}</Hours>
            <Logo>
              <svg width="26" height="16" viewBox="0 0 26 16" aria-hidden="true">
                <path d="M1 1H26L20 15H7V8H1z" fill="#fff" />
                <path d="M2.5 2.5H11V13.5H8.5V6.5H2.5z" fill="#060606" />
                <circle cx="14.3" cy="4.6" r="2.1" fill="#060606" />
                <path d="M18.5 2.5H23.8L19 13.5H13.8z" fill="#060606" />
              </svg>
            </Logo>
            <Flag>
              <svg width="17" height="17" viewBox="0 0 17 17" aria-hidden="true">
                <circle cx="8.5" cy="8.5" r="7.8" fill="#fff" stroke="#c9263f" strokeWidth="1.2" />
                <path d="M8 5.5h6M8 8.5h7M3 11h11.5M5 13.5h7" stroke="#d8324a" strokeWidth="1.3" />
                <path d="M3 4.5C4 3 6 2.5 8.5 2.5V9H2.5z" fill="#2c6ac8" />
              </svg>
            </Flag>
            <CursorPrice>
              <AddAlert aria-label="add alert"><Icon name="plusCircle" size={13} w={2.4} /></AddAlert>
              <PriceTag>1,34444</PriceTag>
            </CursorPrice>
            <LivePrice><PriceTag $live>1,34373</PriceTag></LivePrice>
            <CursorTime>{"mar 10 Mar '26   10:55"}</CursorTime>
            <AxisSettings aria-label="axis settings"><Icon name="hexagon" size={12} w={2.6} /></AxisSettings>
            <Viewers>
              <svg width="19" height="20" viewBox="0 0 19 20" aria-hidden="true">
                <path d="M1 1H7V5H9V3H11V1H18V7H16V9H14V11H16V13H18V19H11V17H9V15H7V19H1z" fill="#53fc18" stroke="#1c5f10" />
              </svg>
              83
            </Viewers>
          </Chart>

          <ReplayBar>
            <ReplayTools>
              <Wide $w={122}><Icon name="pickBar" size={14} />Seleccionar la barra</Wide>
              <Cell $w={20} aria-label="bar options"><Icon name="chevron" size={11} w={3} /></Cell>
              <Rule $m={6} />
              <Cell $w={28} aria-label="play"><Icon name="play" size={14} /></Cell>
              <Cell $w={28} aria-label="step"><Icon name="step" size={13} /></Cell>
              <Cell $w={28}>10x</Cell>
              <Cell $w={28}>5m</Cell>
              <Rule $m={6} />
              <Cell $w={28} aria-label="to end"><Icon name="toEnd" size={14} /></Cell>
            </ReplayTools>
            <CloseReplay aria-label="close replay"><Icon name="close" size={15} w={2.4} /></CloseReplay>
          </ReplayBar>

          <RangeBar>
            {["1D", "5D", "1M", "3M", "6M", "YTD", "1A", "5A", "Todos"].map((r) => <Range key={r}>{r}</Range>)}
            <Rule $m={0} />
            <Range aria-label="go to"><Icon name="calendar" size={16} /></Range>
            <Clock>20:29:56 UTC-5</Clock>
          </RangeBar>

          <Footer>
            <Broker>
              <BrokerIcon>
                <svg width="10" height="8" viewBox="0 0 10 8" fill="currentColor"><path d="M4.5 0v8L0 4zM9.5 0v8L5 4z" /></svg>
                <Online />
              </BrokerIcon>
              Reproducir trading
              <Operate>Opere</Operate>
            </Broker>
            <Dock>
              <svg width="18" height="14" viewBox="0 0 18 14" fill="#5a5a5b" aria-hidden="true">
                {[2, 7, 12].map((y) => <path key={y} d={`M6 ${y - 1}h2v2h-2zM10 ${y - 1}h2v2h-2z`} />)}
              </svg>
              {dock.map((n) => <DockTool key={n} aria-label={n}><Icon name={n} w={1.6} /></DockTool>)}
            </Dock>
            <PanelTools>
              <Icon name="chevronUp" size={14} />
              <Icon name="expand" size={14} w={2.4} />
            </PanelTools>
          </Footer>
        </Column>
      </Workspace>

      <Chat>
        <Messages>
          {chat.map((m, i) => (
            <Message key={i} $line={i < 9} $badged={!!m.badge}>
              {m.badge && <ChatBadge kind={m.badge} />}
              <span><Who $c={m.c}>{m.who}</Who> : {m.text}</span>
              {m.frog && <Frog />}
            </Message>
          ))}
        </Messages>
      </Chat>
    </Page>
  );
}
